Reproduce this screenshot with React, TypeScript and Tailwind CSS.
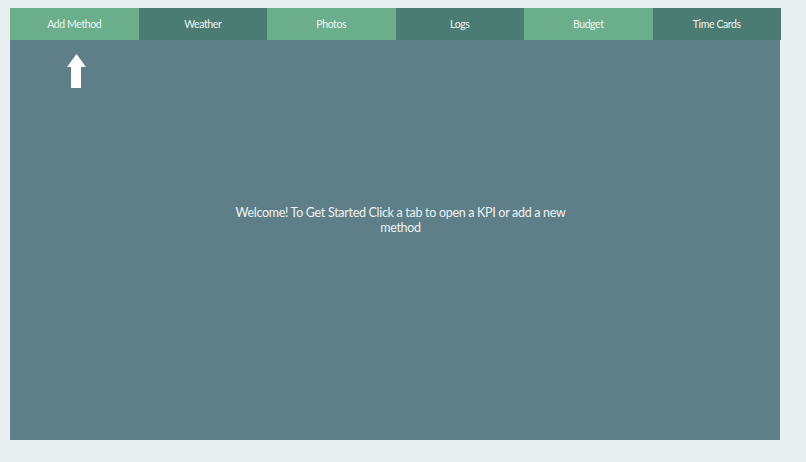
import React from 'react';

const tabs = [
  { label: 'Add Method', light: true },
  { label: 'Weather', light: false },
  { label: 'Photos', light: true },
  { label: 'Logs', light: false },
  { label: 'Budget', light: true },
  { label: 'Time Cards', light: false },
];

export default function App() {
  return (
    <div className="w-[806px] h-[462px] bg-[#e9eef1] pt-2 pl-[10px]" style={{ fontFamily: 'Lato, "Noto Sans", sans-serif' }}>
      <div className="w-[770px] h-[432px] flex flex-col">
        {/* tab bar */}
        <div className="flex h-[32px] w-[771px]">
          {tabs.map((t) => (
            <div
              key={t.label}
              className={`flex-1 flex items-center justify-center pt-[1px] text-[10.5px] tracking-[-0.4px] text-[#eef5f2] ${t.light ? 'bg-[#6aae8b]' : 'bg-[#4a7c73]'}`}
            >
              {t.label}
            </div>
          ))}
        </div>

        {/* content */}
        <div className="flex-1 bg-[#5e7f87] flex flex-col">
          <div className="pt-[14px] pl-[57px]">
            <svg width="19" height="34" viewBox="0 0 19 34">
              <path d="M9.5 0 L19 13 L14 13 L14 34 L4 34 L4 13 L0 13 Z" fill="#ffffff" />
            </svg>
          </div>
          <div className="mt-[117px] flex justify-center pl-[11px]">
            <p className="w-[350px] text-center text-[12.5px] leading-[15px] tracking-[-0.3px] text-[#eef2f3]">
              Welcome! To Get Started Click a tab to open a KPI or add a new method
            </p>
          </div>
        </div>
      </div>
    </div>
  );
}
